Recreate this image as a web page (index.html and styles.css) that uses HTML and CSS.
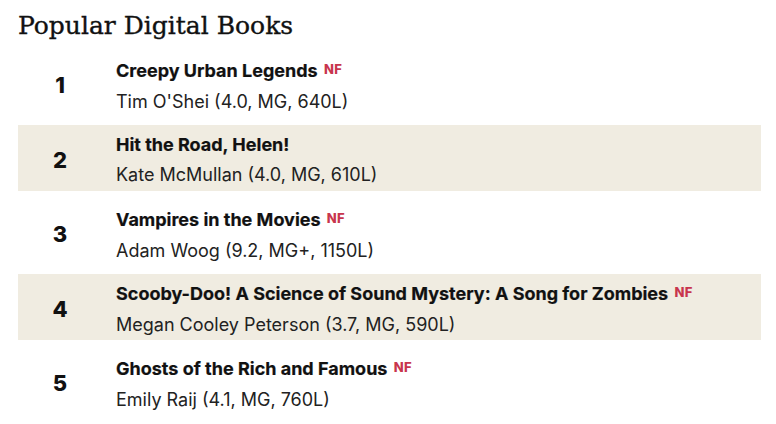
FILE: index.html
```html
<!DOCTYPE html>
<html lang="en">
<head>
<meta charset="utf-8">
<title>Popular Digital Books</title>
<link rel="stylesheet" href="styles.css">
</head>
<body>
<section class="books">
  <h2 class="books-title">Popular Digital Books</h2>
  <ol class="book-list">
    <li class="book">
      <span class="book-rank">1</span>
      <div class="book-info">
        <div class="book-name">Creepy Urban Legends <span class="nf">NF</span></div>
        <div class="book-meta">Tim O'Shei (4.0, MG, 640L)</div>
      </div>
    </li>
    <li class="book book-alt">
      <span class="book-rank">2</span>
      <div class="book-info">
        <div class="book-name">Hit the Road, Helen!</div>
        <div class="book-meta">Kate McMullan (4.0, MG, 610L)</div>
      </div>
    </li>
    <li class="book">
      <span class="book-rank">3</span>
      <div class="book-info">
        <div class="book-name">Vampires in the Movies <span class="nf">NF</span></div>
        <div class="book-meta">Adam Woog (9.2, MG+, 1150L)</div>
      </div>
    </li>
    <li class="book book-alt">
      <span class="book-rank">4</span>
      <div class="book-info">
        <div class="book-name">Scooby-Doo! A Science of Sound Mystery: A Song for Zombies <span class="nf">NF</span></div>
        <div class="book-meta">Megan Cooley Peterson (3.7, MG, 590L)</div>
      </div>
    </li>
    <li class="book">
      <span class="book-rank">5</span>
      <div class="book-info">
        <div class="book-name">Ghosts of the Rich and Famous <span class="nf">NF</span></div>
        <div class="book-meta">Emily Raij (4.1, MG, 760L)</div>
      </div>
    </li>
  </ol>
</section>
</body>
</html>
```

FILE: styles.css
```css
html, body {
  margin: 0;
  padding: 0;
  background: #ffffff;
}

body {
  font-family: "Inter", "Liberation Sans", sans-serif;
  color: #111111;
}

.books {
  padding: 0 15px 0 18px;
}

.books-title {
  margin: 0;
  padding-top: 11px;
  font-family: "DejaVu Serif", "Liberation Serif", serif;
  font-weight: 400;
  font-size: 25px;
  line-height: 30px;
  color: #111111;
  -webkit-text-stroke: 0.35px #111111;
}

.book-list {
  list-style: none;
  margin: 9px 0 0 0;
  padding: 0;
  display: flex;
  flex-direction: column;
  gap: 8.5px;
}

.book {
  height: 66px;
  display: grid;
  grid-template-columns: 84px 1fr;
  column-gap: 14px;
  align-items: start;
}

.book-alt {
  background: #f0ece1;
}

.book-rank {
  padding-top: 22px;
  text-align: center;
  font-weight: 800;
  font-size: 22px;
  line-height: 26px;
  color: #111111;
}

.book-info {
  padding-top: 9.5px;
}

.book-name {
  font-weight: 700;
  font-size: 18px;
  line-height: 22px;
  color: #111111;
  -webkit-text-stroke: 0.2px #111111;
}

.book-meta {
  margin-top: 8px;
  font-size: 18px;
  line-height: 22px;
  color: #222222;
}

.nf {
  position: relative;
  top: -3px;
  margin-left: 2px;
  font-size: 13px;
  font-weight: 800;
  letter-spacing: 0.3px;
  color: #c8354d;
  -webkit-text-stroke: 0;
}
```
